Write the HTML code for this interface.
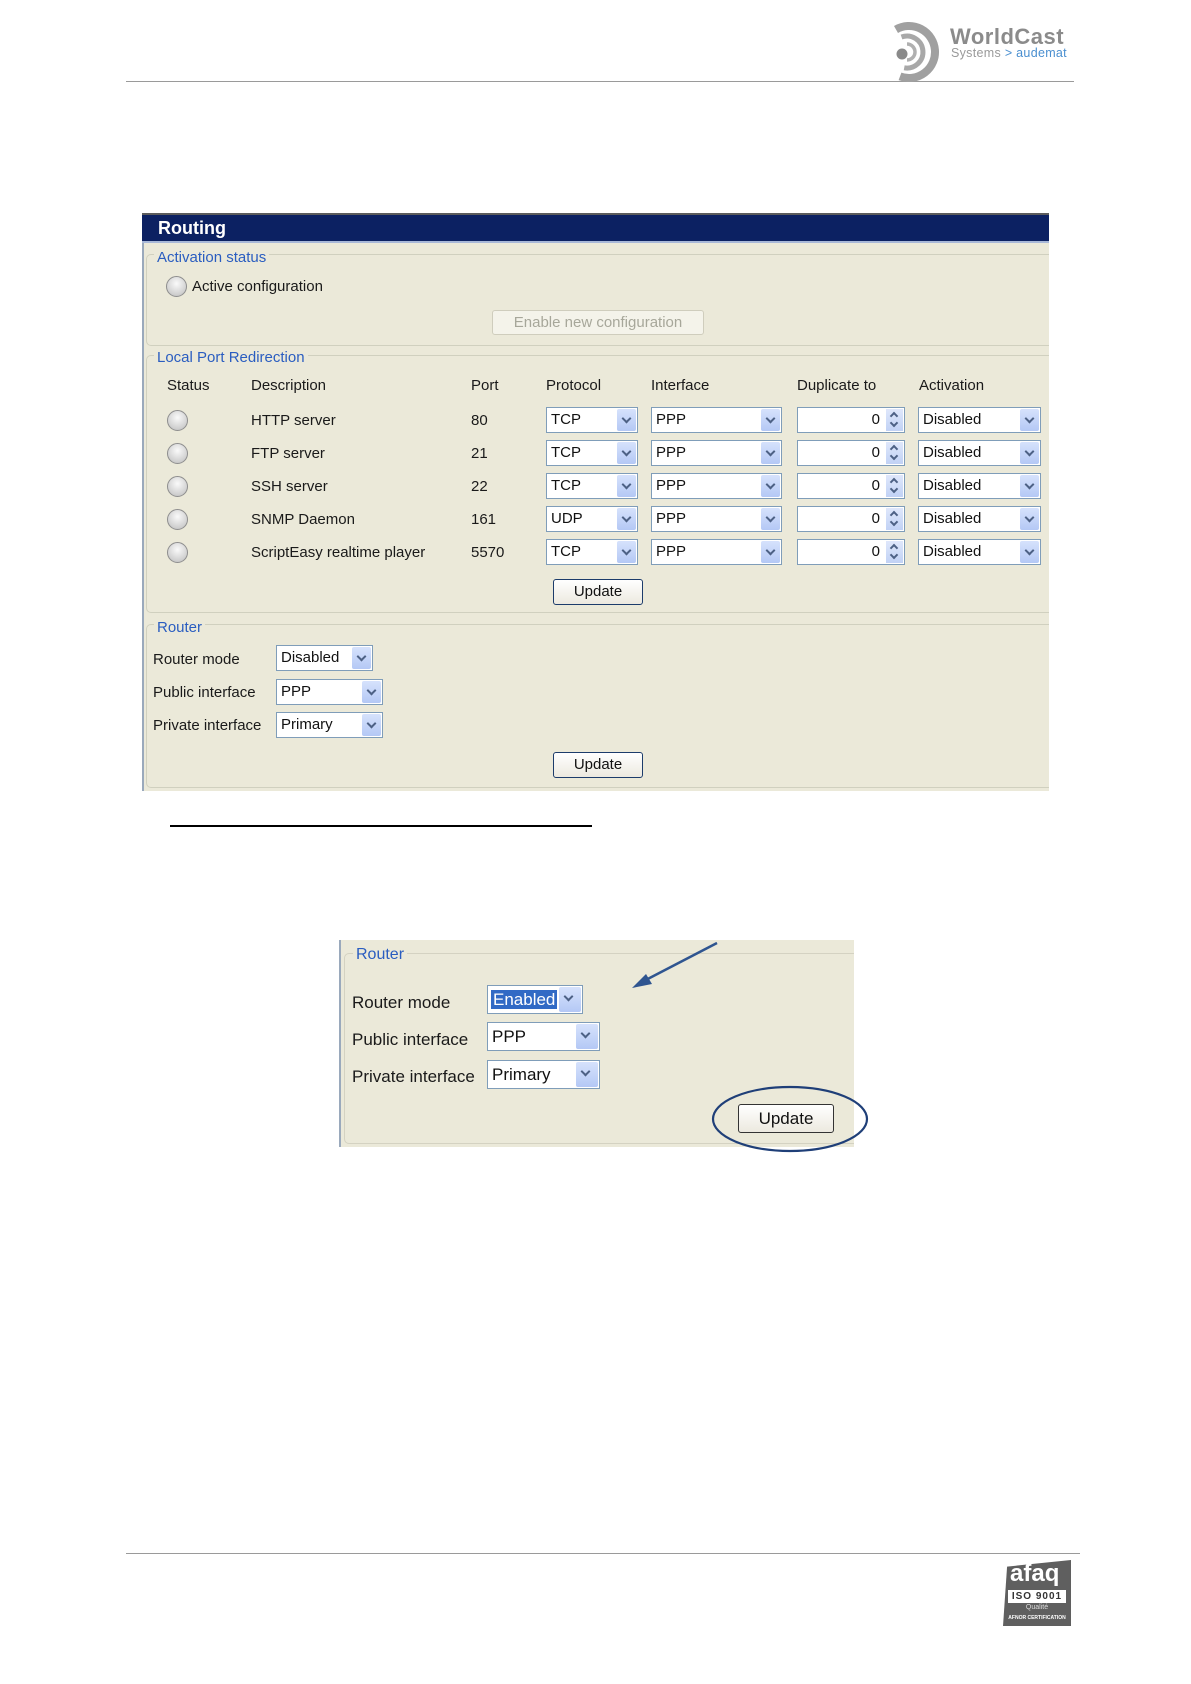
<!DOCTYPE html>
<html><head><meta charset="utf-8">
<style>
*{margin:0;padding:0;box-sizing:border-box}
body{width:1191px;height:1684px;background:#fff;position:relative;font-family:"Liberation Sans",sans-serif;overflow:hidden}
.a{position:absolute}
.t{position:absolute;font-size:15px;color:#1a1a1a;white-space:nowrap;line-height:18px}
.leg{position:absolute;font-size:15px;color:#2a5dc0;background:#ebe9d9;padding:0 3px;line-height:18px}
.fs{position:absolute;border:1px solid #d0d0bf;border-radius:5px}
.sel{position:absolute;height:26px;background:#fff;border:1px solid #7f9db9;font-size:15px;line-height:24px;padding-left:4px;color:#111}
.sel .ar{position:absolute;right:1px;top:1px;width:19px;height:22px;background:linear-gradient(#d6e2fc,#b4c8f5);border-radius:2px}
.sel .ar:after{content:"";position:absolute;left:6px;top:6px;width:5px;height:5px;border-right:2px solid #4d6185;border-bottom:2px solid #4d6185;transform:rotate(45deg)}
.spin{position:absolute;height:26px;background:#fff;border:1px solid #7f9db9;font-size:15px;line-height:24px;text-align:right;padding-right:24px;color:#111}
.spin .ar{position:absolute;right:1px;top:1px;width:17px;height:22px;background:linear-gradient(#dfe7fb,#c1d2f5)}
.spin .ar:before{content:"";position:absolute;left:5px;top:4px;width:4px;height:4px;border-left:2px solid #4d6185;border-top:2px solid #4d6185;transform:rotate(45deg)}
.spin .ar:after{content:"";position:absolute;left:5px;top:11px;width:4px;height:4px;border-right:2px solid #4d6185;border-bottom:2px solid #4d6185;transform:rotate(45deg)}
.btn{position:absolute;border:1px solid #1c3c6b;border-radius:3px;background:linear-gradient(#fff,#ece9df);font-size:15px;text-align:center;color:#111}
.rad{position:absolute;width:21px;height:21px;border-radius:50%;border:1px solid #8e8e8e;background:radial-gradient(circle at 50% 35%,#fafafa,#cfcfcf 70%,#b5b5b5)}
</style></head><body>
<!-- header -->
<div class="a" style="left:126px;top:81px;width:948px;height:1px;background:#9a9a9a"></div>
<svg class="a" style="left:893px;top:20px" width="60" height="62" viewBox="0 0 60 62">
<g fill="none">
<path d="M3 9.5 A26 26 0 1 1 7 56.4" stroke="#a0a0a0" stroke-width="8"/>
<path d="M8.5 17 A16 16 0 1 1 11.2 47.8" stroke="#a8a8a8" stroke-width="5"/>
<path d="M14 24 A8 8 0 0 1 14 40" stroke="#b0b0b0" stroke-width="3.5"/>
</g>
<circle cx="9" cy="34" r="5.5" fill="#8a8a8a"/>
</svg>
<div class="a" style="left:950px;top:24px;font-size:22px;font-weight:bold;color:#8b8b8b;letter-spacing:0.5px">WorldCast</div>
<div class="a" style="left:951px;top:46px;font-size:12.5px;color:#9a9a9a;letter-spacing:0.3px">Systems <span style="color:#4a8fd0">&gt; audemat</span></div>

<!-- routing panel -->
<div class="a" style="left:142px;top:213px;width:907px;height:578px;background:#ebe9d9;border-left:2px solid #9aa9bc;overflow:hidden">
<div class="fs" style="left:2px;top:41px;width:920px;height:92px"></div>
<div class="fs" style="left:2px;top:142px;width:920px;height:258px"></div>
<div class="fs" style="left:2px;top:411px;width:920px;height:164px"></div>
</div>
<div class="a" style="left:142px;top:213px;width:907px;height:30px;background:#0c2162;border-top:2px solid #5c5c5c;border-bottom:2px solid #a8b8d8"></div>
<div class="a" style="left:158px;top:218px;font-size:18px;font-weight:bold;color:#fff">Routing</div>

<div class="leg" style="left:154px;top:249px">Activation status</div>
<div class="rad" style="left:166px;top:276px"></div>
<div class="t" style="left:192px;top:278px">Active configuration</div>
<div class="a" style="left:492px;top:310px;width:212px;height:25px;border:1px solid #cfcdbd;border-radius:3px;background:#f4f3ea;color:#a7a79a;font-size:15px;text-align:center;line-height:23px">Enable new configuration</div>

<div class="leg" style="left:154px;top:349px">Local Port Redirection</div>
<div class="t" style="left:167px;top:377px">Status</div>
<div class="t" style="left:251px;top:377px">Description</div>
<div class="t" style="left:471px;top:377px">Port</div>
<div class="t" style="left:546px;top:377px">Protocol</div>
<div class="t" style="left:651px;top:377px">Interface</div>
<div class="t" style="left:797px;top:377px">Duplicate to</div>
<div class="t" style="left:919px;top:377px">Activation</div>

<!-- rows -->
<div class="rad" style="left:167px;top:410px"></div><div class="t" style="left:251px;top:412px">HTTP server</div><div class="t" style="left:471px;top:412px">80</div>
<div class="sel" style="left:546px;top:407px;width:92px">TCP<div class="ar"></div></div><div class="sel" style="left:651px;top:407px;width:131px">PPP<div class="ar"></div></div><div class="spin" style="left:797px;top:407px;width:108px">0<div class="ar"></div></div><div class="sel" style="left:918px;top:407px;width:123px">Disabled<div class="ar"></div></div>

<div class="rad" style="left:167px;top:443px"></div><div class="t" style="left:251px;top:445px">FTP server</div><div class="t" style="left:471px;top:445px">21</div>
<div class="sel" style="left:546px;top:440px;width:92px">TCP<div class="ar"></div></div><div class="sel" style="left:651px;top:440px;width:131px">PPP<div class="ar"></div></div><div class="spin" style="left:797px;top:440px;width:108px">0<div class="ar"></div></div><div class="sel" style="left:918px;top:440px;width:123px">Disabled<div class="ar"></div></div>

<div class="rad" style="left:167px;top:476px"></div><div class="t" style="left:251px;top:478px">SSH server</div><div class="t" style="left:471px;top:478px">22</div>
<div class="sel" style="left:546px;top:473px;width:92px">TCP<div class="ar"></div></div><div class="sel" style="left:651px;top:473px;width:131px">PPP<div class="ar"></div></div><div class="spin" style="left:797px;top:473px;width:108px">0<div class="ar"></div></div><div class="sel" style="left:918px;top:473px;width:123px">Disabled<div class="ar"></div></div>

<div class="rad" style="left:167px;top:509px"></div><div class="t" style="left:251px;top:511px">SNMP Daemon</div><div class="t" style="left:471px;top:511px">161</div>
<div class="sel" style="left:546px;top:506px;width:92px">UDP<div class="ar"></div></div><div class="sel" style="left:651px;top:506px;width:131px">PPP<div class="ar"></div></div><div class="spin" style="left:797px;top:506px;width:108px">0<div class="ar"></div></div><div class="sel" style="left:918px;top:506px;width:123px">Disabled<div class="ar"></div></div>

<div class="rad" style="left:167px;top:542px"></div><div class="t" style="left:251px;top:544px">ScriptEasy realtime player</div><div class="t" style="left:471px;top:544px">5570</div>
<div class="sel" style="left:546px;top:539px;width:92px">TCP<div class="ar"></div></div><div class="sel" style="left:651px;top:539px;width:131px">PPP<div class="ar"></div></div><div class="spin" style="left:797px;top:539px;width:108px">0<div class="ar"></div></div><div class="sel" style="left:918px;top:539px;width:123px">Disabled<div class="ar"></div></div>

<div class="btn" style="left:553px;top:579px;width:90px;height:26px;line-height:24px">Update</div>

<div class="leg" style="left:154px;top:619px">Router</div>
<div class="t" style="left:153px;top:651px">Router mode</div>
<div class="t" style="left:153px;top:684px">Public interface</div>
<div class="t" style="left:153px;top:717px">Private interface</div>
<div class="sel" style="left:276px;top:645px;width:97px">Disabled<div class="ar"></div></div>
<div class="sel" style="left:276px;top:679px;width:107px">PPP<div class="ar"></div></div>
<div class="sel" style="left:276px;top:712px;width:107px">Primary<div class="ar"></div></div>
<div class="btn" style="left:553px;top:752px;width:90px;height:26px;line-height:24px">Update</div>

<div class="a" style="left:170px;top:825px;width:422px;height:2px;background:#000"></div>

<!-- zoomed router -->
<div class="a" style="left:339px;top:940px;width:515px;height:207px;background:#ebe9d9;border-left:2px solid #9aa9bc;overflow:hidden">
<div class="fs" style="left:3px;top:13px;width:540px;height:191px;border-color:#d4d2c2"></div>
</div>
<div class="leg" style="left:353px;top:946px;font-size:16px">Router</div>
<div class="t" style="left:352px;top:993px;font-size:17px;line-height:20px">Router mode</div>
<div class="t" style="left:352px;top:1030px;font-size:17px;line-height:20px">Public interface</div>
<div class="t" style="left:352px;top:1067px;font-size:17px;line-height:20px">Private interface</div>
<div class="sel" style="left:487px;top:985px;width:96px;height:29px;font-size:17px;line-height:27px;padding-left:3px"><span style="background:#316ac5;color:#fff;padding:0 2px">Enabled</span><div class="ar" style="height:25px;width:22px"></div></div>
<div class="sel" style="left:487px;top:1022px;width:113px;height:29px;font-size:17px;line-height:27px">PPP<div class="ar" style="height:25px;width:22px"></div></div>
<div class="sel" style="left:487px;top:1060px;width:113px;height:29px;font-size:17px;line-height:27px">Primary<div class="ar" style="height:25px;width:22px"></div></div>
<div class="btn" style="left:738px;top:1104px;width:96px;height:29px;line-height:27px;font-size:17px;border-color:#333">Update</div>
<svg class="a" style="left:0;top:0;overflow:visible" width="1191" height="1684">
<ellipse cx="790" cy="1119" rx="77" ry="32" fill="none" stroke="#1f3f78" stroke-width="2.2"/>
<line x1="717" y1="943" x2="640" y2="983" stroke="#2f5590" stroke-width="2.5"/>
<polygon points="632,988 646,974 652,984" fill="#2f5590"/>
</svg>

<!-- footer -->
<div class="a" style="left:126px;top:1553px;width:954px;height:1px;background:#9a9a9a"></div>
<div class="a" style="left:1003px;top:1560px;width:68px;height:66px;background:#5f5f5f;clip-path:polygon(6% 10%,100% 0,100% 100%,0 100%)"></div>
<div class="a" style="left:1010px;top:1560px;color:#fff;font-size:24px;font-weight:bold;font-family:'Liberation Sans',sans-serif">afaq</div>
<div class="a" style="left:1008px;top:1590px;width:58px;height:13px;background:#fff;color:#333;font-size:10px;font-weight:bold;text-align:center;line-height:13px;letter-spacing:1px">ISO 9001</div>
<div class="a" style="left:1008px;top:1604px;width:58px;color:#ddd;font-size:7px;text-align:center">Qualité</div>
<div class="a" style="left:1005px;top:1615px;width:64px;color:#fff;font-size:5px;text-align:center;font-weight:bold">AFNOR CERTIFICATION</div>
</body></html>
